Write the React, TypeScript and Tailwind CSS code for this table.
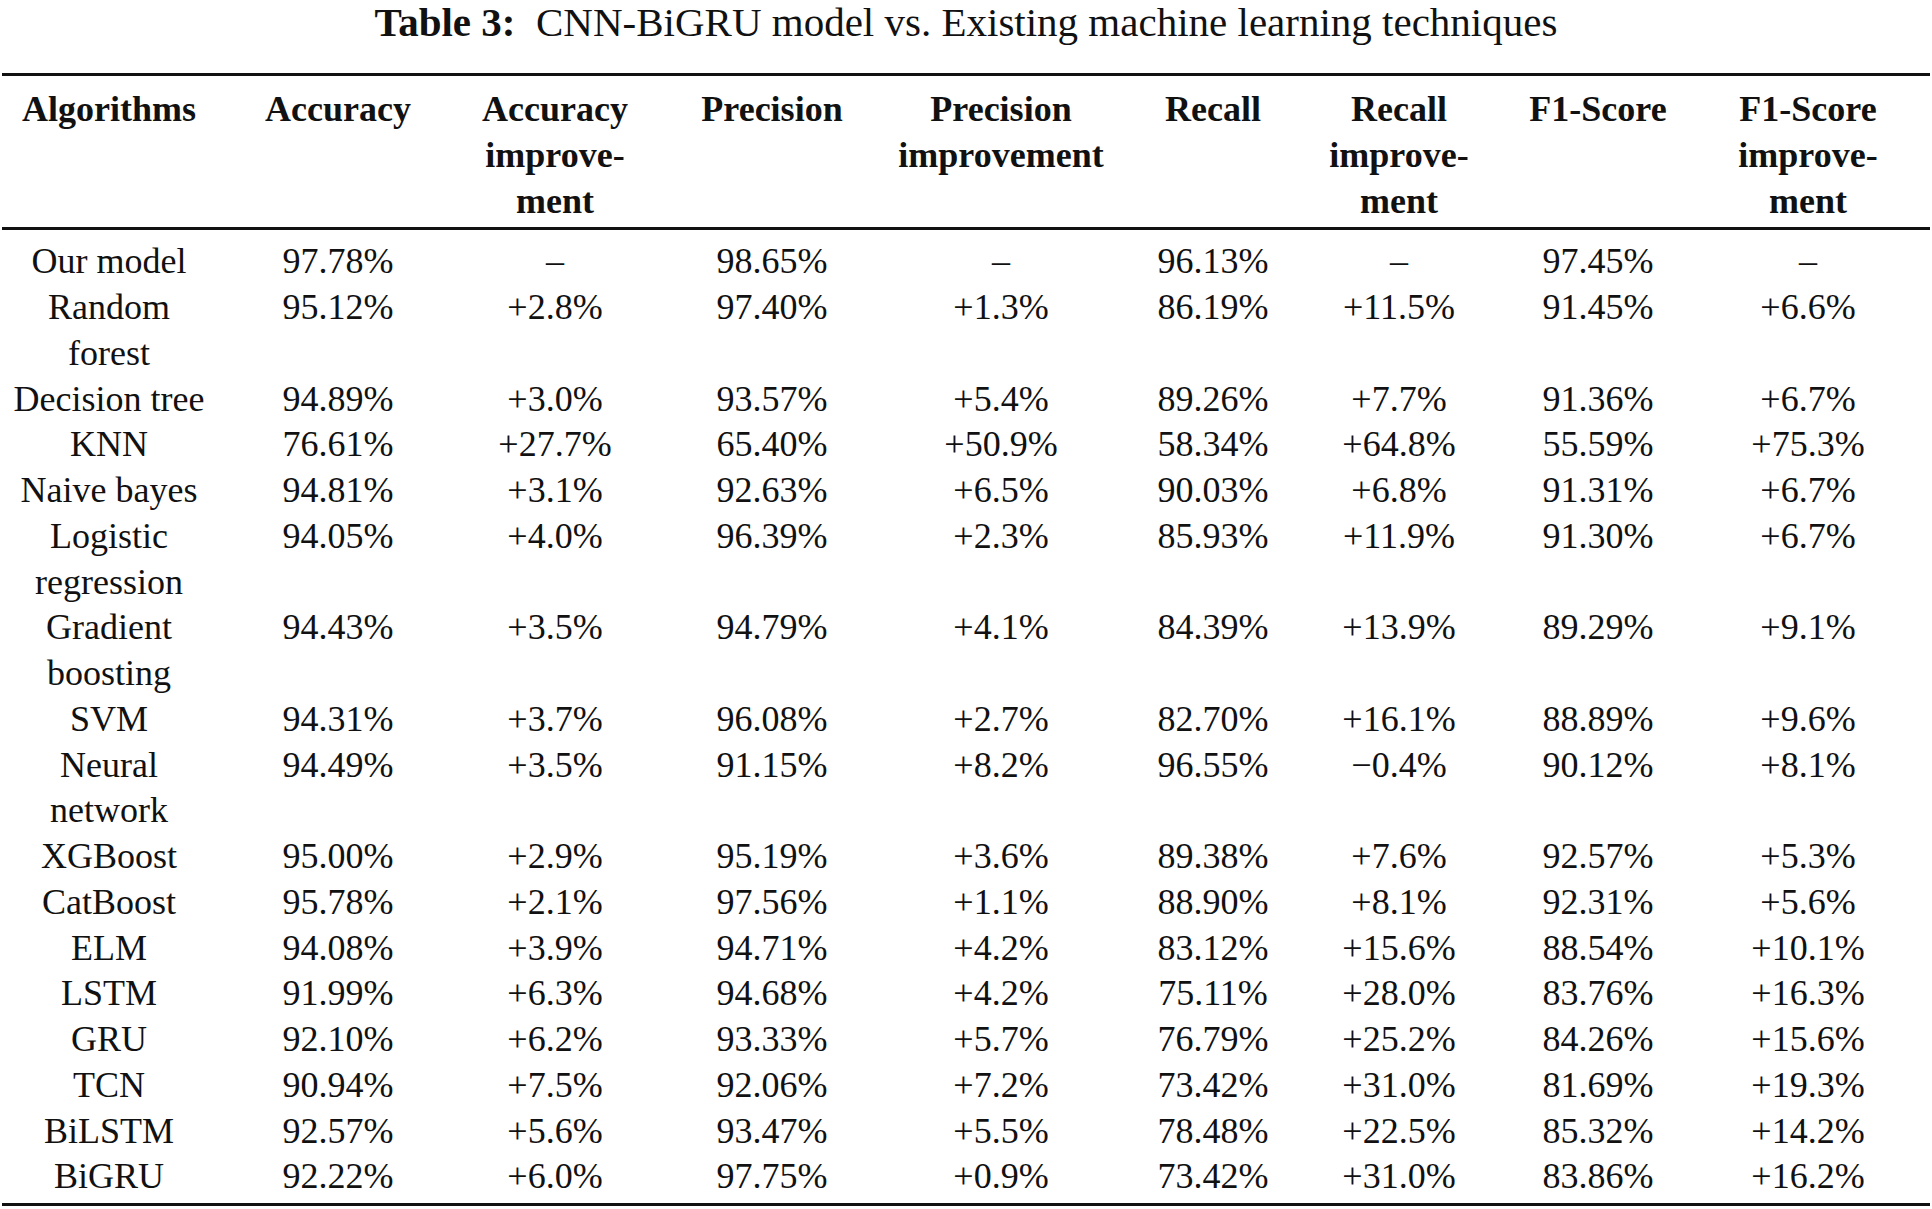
import React from 'react';

const cols = 'grid grid-cols-[214px_244px_190px_244px_214px_210px_162px_236px_214px]';

const headers: React.ReactNode[] = [
  'Algorithms',
  'Accuracy',
  <>Accuracy<br />improve-<br />ment</>,
  'Precision',
  <>Precision<br />improvement</>,
  'Recall',
  <>Recall<br />improve-<br />ment</>,
  'F1-Score',
  <>F1-Score<br />improve-<br />ment</>
];

const rows: React.ReactNode[][] = [
  ['Our model', '97.78%', '–', '98.65%', '–', '96.13%', '–', '97.45%', '–'],
  [<>Random<br />forest</>, '95.12%', '+2.8%', '97.40%', '+1.3%', '86.19%', '+11.5%', '91.45%', '+6.6%'],
  ['Decision tree', '94.89%', '+3.0%', '93.57%', '+5.4%', '89.26%', '+7.7%', '91.36%', '+6.7%'],
  ['KNN', '76.61%', '+27.7%', '65.40%', '+50.9%', '58.34%', '+64.8%', '55.59%', '+75.3%'],
  ['Naive bayes', '94.81%', '+3.1%', '92.63%', '+6.5%', '90.03%', '+6.8%', '91.31%', '+6.7%'],
  [<>Logistic<br />regression</>, '94.05%', '+4.0%', '96.39%', '+2.3%', '85.93%', '+11.9%', '91.30%', '+6.7%'],
  [<>Gradient<br />boosting</>, '94.43%', '+3.5%', '94.79%', '+4.1%', '84.39%', '+13.9%', '89.29%', '+9.1%'],
  ['SVM', '94.31%', '+3.7%', '96.08%', '+2.7%', '82.70%', '+16.1%', '88.89%', '+9.6%'],
  [<>Neural<br />network</>, '94.49%', '+3.5%', '91.15%', '+8.2%', '96.55%', '−0.4%', '90.12%', '+8.1%'],
  ['XGBoost', '95.00%', '+2.9%', '95.19%', '+3.6%', '89.38%', '+7.6%', '92.57%', '+5.3%'],
  ['CatBoost', '95.78%', '+2.1%', '97.56%', '+1.1%', '88.90%', '+8.1%', '92.31%', '+5.6%'],
  ['ELM', '94.08%', '+3.9%', '94.71%', '+4.2%', '83.12%', '+15.6%', '88.54%', '+10.1%'],
  ['LSTM', '91.99%', '+6.3%', '94.68%', '+4.2%', '75.11%', '+28.0%', '83.76%', '+16.3%'],
  ['GRU', '92.10%', '+6.2%', '93.33%', '+5.7%', '76.79%', '+25.2%', '84.26%', '+15.6%'],
  ['TCN', '90.94%', '+7.5%', '92.06%', '+7.2%', '73.42%', '+31.0%', '81.69%', '+19.3%'],
  ['BiLSTM', '92.57%', '+5.6%', '93.47%', '+5.5%', '78.48%', '+22.5%', '85.32%', '+14.2%'],
  ['BiGRU', '92.22%', '+6.0%', '97.75%', '+0.9%', '73.42%', '+31.0%', '83.86%', '+16.2%']
];

export default function App() {
  return <div className="w-[1932px] h-[1209px] bg-white text-[#111] font-['Liberation_Serif',serif] overflow-hidden">
      {/* caption */}
      <div className="text-center text-[41px] leading-[44px] whitespace-nowrap">
        <span className="font-bold">Table 3:</span>&nbsp; CNN-BiGRU model vs. Existing machine learning techniques
      </div>

      <div className="ml-[2px] mt-[29px] w-[1928px]">
        <div className="border-t-[3px] border-[#111]" />

        {/* header */}
        <div className={`${cols} pt-[11px] pb-[3px] text-[36px] leading-[45.75px] font-bold`}>
          {headers.map((h, i) => <div key={i} className={`text-center whitespace-nowrap ${i === 8 ? 'pr-[30px]' : ''}`}>
              {h}
            </div>)}
        </div>

        <div className="border-t-[3px] border-[#111]" />

        {/* body */}
        <div className={`${cols} pt-[9px] pb-[3px] text-[36px] leading-[45.75px]`}>
          {rows.map((r, ri) => r.map((c, ci) => <div key={`${ri}-${ci}`} className={`text-center whitespace-nowrap ${ci === 8 ? 'pr-[30px]' : ''}`}>
                {c}
              </div>))}
        </div>

        <div className="border-t-[3px] border-[#111]" />
      </div>
    </div>;
}
